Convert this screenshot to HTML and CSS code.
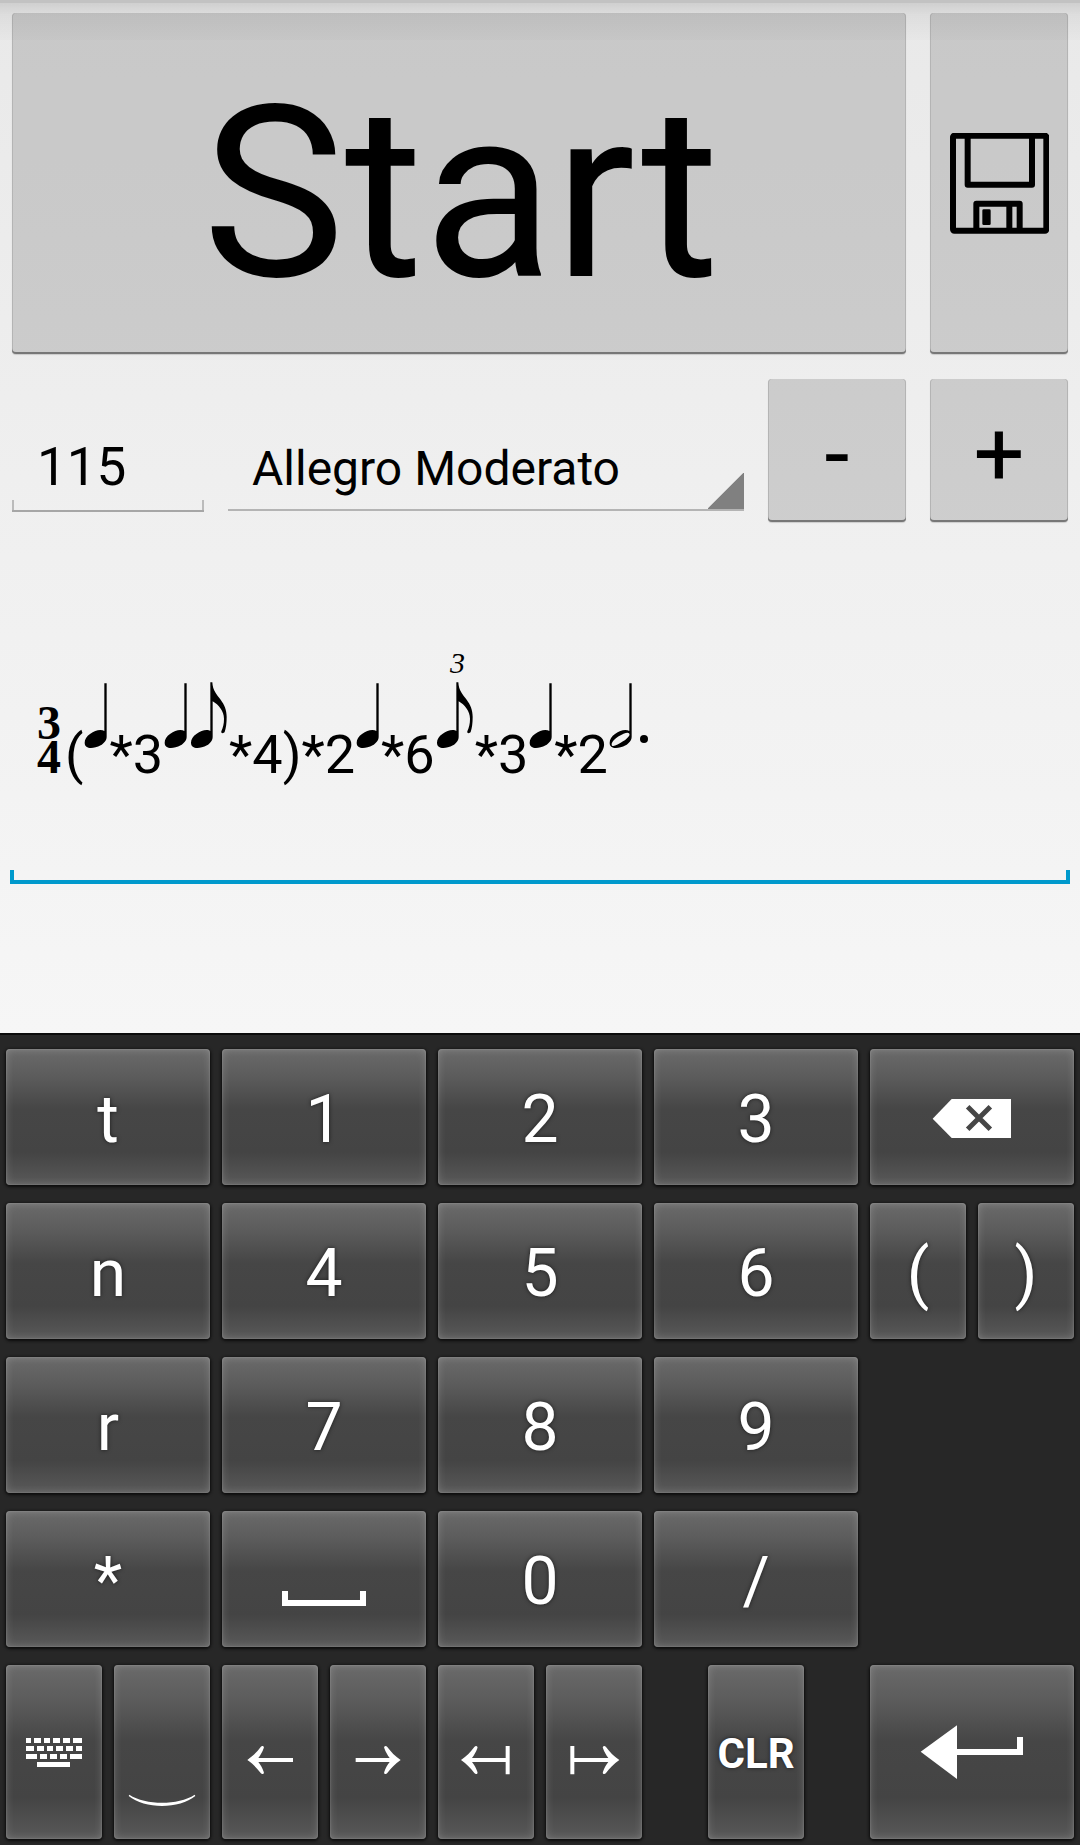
FILE: index.html
```html
<!DOCTYPE html>
<html lang="en">
<head>
<meta charset="utf-8">
<meta name="viewport" content="width=device-width, initial-scale=1">
<title>Metronome</title>
<link rel="stylesheet" href="styles.css">
</head>
<body>
<svg class="symbols" aria-hidden="true">
  <symbol id="quarter" viewBox="-2 3 78 288">
    <path d="M62 22h7v160c0 12-9 20-18 26-10 6-21 8-29 8-11 0-19-5-19-16 0-10 6-19 16-26 11-8 21-12 31-12 5 0 9 1 12 3z"/>
  </symbol>
  <symbol id="eighth" viewBox="-3 3 120 288">
    <path d="M61 19h6c1 24 13 37 25 52 11 15 18 30 18 52 0 18-2 33-6 45-3 5-12 5-10-2 5-12 8-22 8-38 0-22-16-42-34-52v106c0 12-8 20-17 26-10 6-21 8-29 8-11 0-19-5-19-16 0-10 6-19 16-26 11-8 21-12 31-12 5 0 8 1 11 3z"/>
  </symbol>
  <symbol id="half" viewBox="0 3 129 288">
    <path fill-rule="evenodd" d="M64 22h7v160c0 12-9 20-18 26-10 6-21 8-29 8-12 0-19-5-19-15 0-11 6-20 16-27 11-8 21-12 31-12 5 0 9 1 12 3zM12 209c6 3 20-4 33-13 12-8 22-17 19-23-4-6-18 0-32 8-15 9-24 21-20 28z"/>
    <circle cx="108" cy="189" r="12"/>
  </symbol>
</svg>

<main class="panel">
  <div class="top-row">
    <button class="btn start" type="button">Start</button>
    <button class="btn" type="button" aria-label="Save">
      <svg class="floppy" viewBox="748 398 300 306" fill="none" stroke="#000" stroke-width="18" stroke-linejoin="round">
        <rect x="760" y="406" width="280" height="285" rx="4"/>
        <path d="M804 406v147h193V406M830 691v-81h130v81M929 610v81"/>
        <rect x="848" y="627" width="25" height="47" rx="4" fill="#000" stroke="none"/>
      </svg>
    </button>
  </div>

  <div class="tempo-row">
    <input class="bpm" type="text" inputmode="numeric" value="115" aria-label="Beats per minute">
    <select class="tempo" aria-label="Tempo">
      <option>Andante</option>
      <option selected>Allegro Moderato</option>
      <option>Allegro</option>
    </select>
    <button class="btn step" type="button">-</button>
    <button class="btn step" type="button">+</button>
  </div>

  <div class="score" role="textbox" contenteditable="true" spellcheck="false" aria-label="Rhythm"><span class="meter"><span>3</span><span>4</span></span>(<svg class="quarter"><use href="#quarter"/></svg>*3<svg class="quarter"><use href="#quarter"/></svg><svg class="eighth"><use href="#eighth"/></svg>*4)*2<svg class="quarter"><use href="#quarter"/></svg>*6<svg class="triplet"><text x="15" y="28">3</text><use href="#eighth" y="32" width="40" height="96"/></svg>*3<svg class="quarter"><use href="#quarter"/></svg>*2<svg class="half"><use href="#half"/></svg></div>
</main>

<section class="keyboard" aria-label="Keyboard">
  <button class="key" type="button">t</button>
  <button class="key" type="button">1</button>
  <button class="key" type="button">2</button>
  <button class="key" type="button">3</button>
  <button class="key art" type="button" aria-label="Backspace">
    <svg class="icon wide" viewBox="90 87 612 408">
      <path d="M278 296l57-59h178v117H335z"/>
      <path d="M383 260l68 68m0-68l-68 68" fill="none" stroke="#464646" stroke-width="15"/>
    </svg>
  </button>

  <button class="key" type="button">n</button>
  <button class="key" type="button">4</button>
  <button class="key" type="button">5</button>
  <button class="key" type="button">6</button>
  <button class="key narrow" type="button">(</button>
  <button class="key narrow" type="button">)</button>

  <button class="key row-start" type="button">r</button>
  <button class="key" type="button">7</button>
  <button class="key" type="button">8</button>
  <button class="key" type="button">9</button>

  <button class="key row-start" type="button">*</button>
  <button class="key art" type="button" aria-label="Space">
    <svg class="icon wide" viewBox="66 93 612 408"><path d="M246 333h18v27h216v-27h18v45H246z"/></svg>
  </button>
  <button class="key" type="button">0</button>
  <button class="key" type="button">/</button>

  <button class="key art narrow row-start" type="button" aria-label="Switch keyboard">
    <svg class="icon tall" viewBox="18 75 288 522">
      <path d="M78 294h15v15H78zM102 294h21v15h-21zM132 294h18v15h-18zM159 294h21v15h-21zM189 294h21v15h-21zM219 294h27v15h-27zM78 318h24v15H78zM111 318h21v15h-21zM141 318h18v15h-18zM168 318h21v15h-21zM198 318h21v15h-21zM228 318h18v15h-18zM78 342h33v15H78zM120 342h21v15h-21zM150 342h21v15h-21zM180 342h21v15h-21zM210 342h36v15h-36zM111 366h99v15h-99z"/>
    </svg>
  </button>
  <button class="key art narrow" type="button" aria-label="Tie">
    <svg class="icon tall" viewBox="342 75 288 522"><path d="M388 464c50 32 146 32 196 0l2 4c-48 40-152 40-200 0z"/></svg>
  </button>
  <button class="key art narrow" type="button" aria-label="Left">
    <svg class="icon tall" viewBox="666 75 288 522"><path d="M742 360c17-12 29-24 40-39 4-6 12-3 9 4-4 11-9 20-16 29h104v12H775c7 9 12 18 16 29 3 7-5 10-9 4-11-15-23-27-40-39z"/></svg>
  </button>
  <button class="key art narrow" type="button" aria-label="Right">
    <svg class="icon tall" viewBox="30 75 288 522"><path d="M242 360c-17-12-29-24-40-39-4-6-12-3-9 4 4 11 9 20 16 29H107v12h102c-7 9-12 18-16 29-3 7 5 10 9 4 11-15 23-27 40-39z"/></svg>
  </button>
  <button class="key art narrow" type="button" aria-label="Line start">
    <svg class="icon tall" viewBox="354 75 288 522"><path d="M423 360c17-12 29-24 40-39 4-6 12-3 9 4-4 11-9 20-16 29h101v-36h12v85h-12v-37H456c7 9 12 18 16 29 3 7-5 10-9 4-11-15-23-27-40-39z"/></svg>
  </button>
  <button class="key art narrow" type="button" aria-label="Line end">
    <svg class="icon tall" viewBox="678 75 288 522"><path d="M898 360c-17-12-29-24-40-39-4-6-12-3-9 4 4 11 9 20 16 29H763v-36h-12v85h12v-37h102c-7 9-12 18-16 29-3 7 5 10 9 4 11-15 23-27 40-39z"/></svg>
  </button>
  <div class="clear-slot"><button class="key clear" type="button">CLR</button></div>
  <button class="key art" type="button" aria-label="Enter">
    <svg class="icon enter" viewBox="630 75 612 522"><path d="M782 335l109-79v71h180v-36h18v54H891v72z"/></svg>
  </button>
</section>
</body>
</html>
```

FILE: styles.css
```css
*,
*::before {
  box-sizing: border-box;
}

body {
  margin: 0;
  min-height: 100vh;
  display: flex;
  flex-direction: column;
  position: relative;
  background: #272727;
  color: #000;
  font-family: Roboto, "Liberation Sans", sans-serif;
}

/* Shadow cast by the bar above the panel */
body::before {
  content: "";
  position: absolute;
  inset: 0 0 auto;
  height: 40px;
  pointer-events: none;
  background: linear-gradient(rgba(0, 0, 0, .17) 3px, rgba(0, 0, 0, .11) 3px, rgba(0, 0, 0, .05) 15px, rgba(0, 0, 0, .01));
}

button,
input,
select {
  margin: 0;
  padding: 0;
  border: 0;
  border-radius: 0;
  color: inherit;
  font-family: inherit;
  outline: 0;
}

.symbols {
  display: none;
}

.panel {
  flex: 1;
  padding: 13px 10px;
  background: linear-gradient(#e9e9e9, #f6f6f6);
}

.top-row,
.tempo-row {
  display: grid;
  gap: 24px;
  padding: 0 2px;
}

.top-row {
  grid-template-columns: 1fr 138px;
  grid-auto-rows: 341px;
  margin-bottom: 25px;
}

.tempo-row {
  grid-template-columns: 192px 1fr 138px 138px;
  grid-auto-rows: 143px;
  align-items: end;
}

.btn {
  display: flex;
  align-items: center;
  justify-content: center;
  height: 100%;
  border-radius: 4px;
  background: rgba(0, 0, 0, .14);
  box-shadow: inset 0 -2px 0 #777, inset 1px 0 0 #b4b4b4, inset -1px 0 0 #b4b4b4, 0 1px 1px rgba(0, 0, 0, .15);
}

.start {
  padding: 20px 0 0 4px;
  font-size: 240px;
}

.step {
  padding-top: 8px;
  font-size: 90px;
}

.floppy {
  width: 100px;
  height: 102px;
}

.bpm {
  width: 100%;
  height: 91px;
  margin-bottom: 10px;
  padding: 0 25px;
  font-size: 53px;
  background:
    linear-gradient(#a6a6a6, #a6a6a6) bottom / 100% 2px no-repeat,
    linear-gradient(#bbb, #bbb) left bottom / 2px 12px no-repeat,
    linear-gradient(#bbb, #bbb) right bottom / 2px 12px no-repeat;
}

.tempo {
  width: 100%;
  height: 84px;
  margin-bottom: 11px;
  padding: 0 24px;
  appearance: none;
  font-size: 48px;
  border-bottom: 2px solid #b4b4b4;
  background: linear-gradient(135deg, transparent calc(50% - 1px), #808080 50%) right bottom / 36px 36px no-repeat;
}

.score {
  min-height: 362px;
  padding: 123px 27px 0;
  font-size: 54px;
  line-height: 64px;
  outline: 0;
  background:
    linear-gradient(#0099cc, #0099cc) bottom / 100% 4px no-repeat,
    linear-gradient(#0099cc, #0099cc) left bottom / 4px 14px no-repeat,
    linear-gradient(#0099cc, #0099cc) right bottom / 4px 14px no-repeat;
}

.score svg {
  height: 96px;
}

.score .quarter {
  width: 26px;
}

.score .eighth {
  width: 40px;
}

.score .half {
  width: 43px;
}

.score .triplet {
  width: 40px;
  height: 128px;
}

.triplet text {
  font: italic 30px "Liberation Serif", serif;
}

.meter {
  display: inline-block;
  width: 28px;
  font: bold 48px/34px "Liberation Serif", serif;
}

.meter span {
  display: block;
}

.keyboard {
  display: grid;
  grid-template-columns: repeat(10, 1fr);
  grid-template-rows: repeat(4, 136px) 174px;
  gap: 18px 12px;
  padding: 14px 6px 6px;
  border-top: 2px solid #0c0c0c;
  background: #272727;
  color: #fff;
}

.key {
  grid-column-end: span 2;
  display: flex;
  align-items: center;
  justify-content: center;
  height: 100%;
  padding-top: 5px;
  border-radius: 4px;
  background: linear-gradient(#6a6a6a, #5c5c5c 20%, #464646 44%, #444 76%, #595959);
  box-shadow: inset 0 0 9px rgba(255, 255, 255, .2), inset 0 0 2px rgba(255, 255, 255, .25), 0 1px 3px 1px #0c0c0c;
  font-size: 66px;
  text-shadow: 0 0 4px rgba(0, 0, 0, .6);
}

.art {
  padding-top: 0;
}

.narrow {
  grid-column-end: span 1;
}

.row-start {
  grid-column-start: 1;
}

.clear-slot {
  grid-column: span 2;
  display: flex;
  justify-content: center;
}

.clear {
  width: 96px;
  padding-top: 3px;
  font-size: 42px;
  font-weight: 700;
}

.icon {
  flex: none;
  fill: #fff;
}

.wide {
  width: 204px;
  height: 136px;
}

.tall {
  width: 96px;
  height: 174px;
}

.enter {
  width: 204px;
  height: 174px;
}
```
